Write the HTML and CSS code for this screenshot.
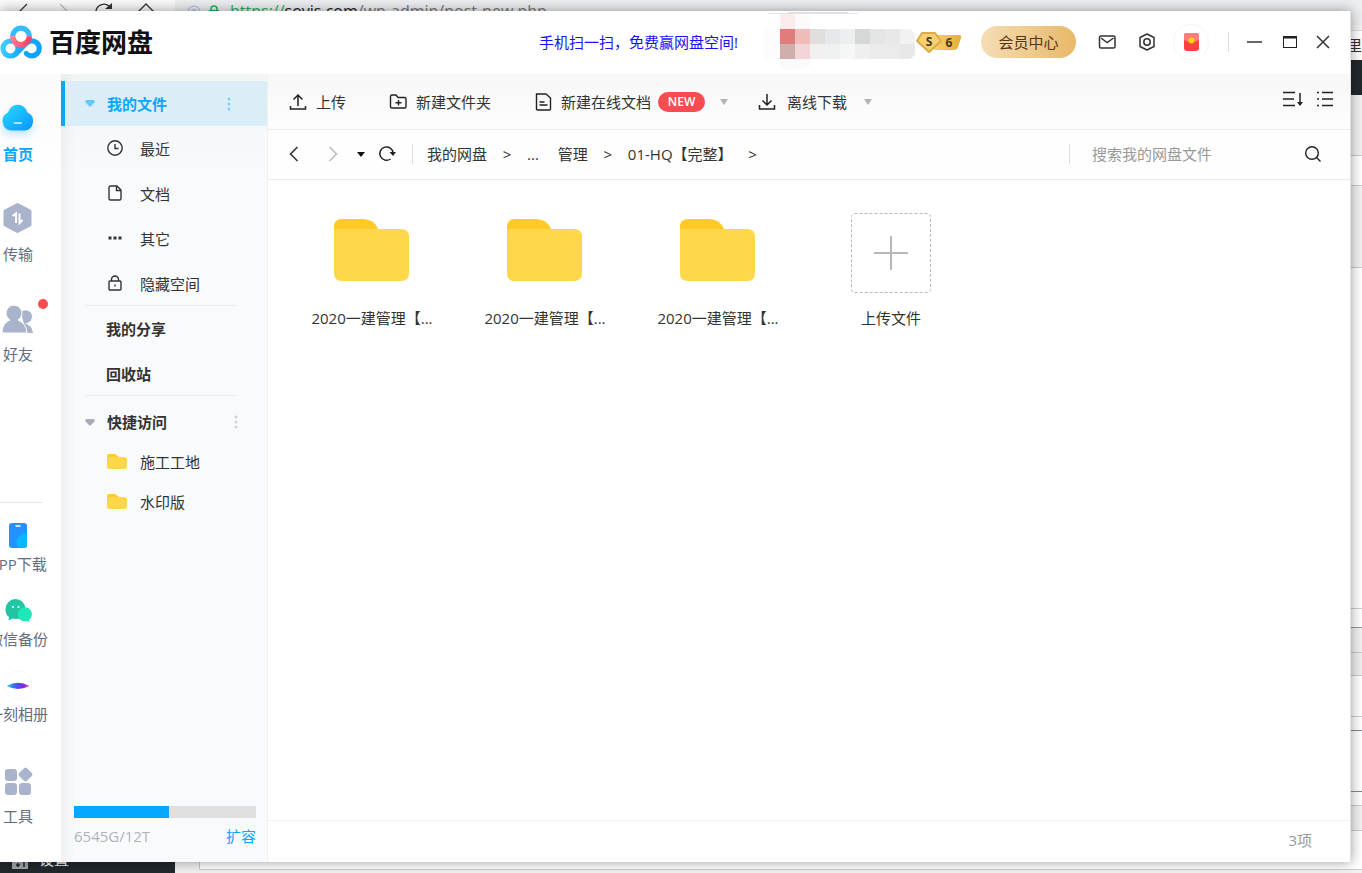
FILE: index.html
```html
<!DOCTYPE html>
<html lang="zh-CN">
<head>
<meta charset="utf-8">
<title>百度网盘</title>
<link rel="stylesheet" href="styles.css">
</head>
<body>
<div class="desktop">
  <div class="browser" aria-hidden="true">
    <div class="browser-bar">
      <div class="browser-nav">
        <svg width="175" height="24" viewBox="0 0 175 24" fill="none" stroke="#333" stroke-width="1.3">
          <path d="M27 4 17 14l10 10"/><path d="M60 4l10 10-10 10" stroke="#bbb"/>
          <path d="M96 13a8 8 0 0 1 14-6"/><path d="M112 3v6h-7z" fill="#333" stroke="none"/>
          <path d="M137 13l9-9 9 9"/>
        </svg>
      </div>
      <div class="address">
        <svg width="40" height="24" viewBox="0 0 40 24" fill="none">
          <circle cx="7" cy="12" r="6" stroke="#9db7e6"/><circle cx="7" cy="12" r="3" fill="#b9cbed"/>
          <path d="M24 11V9a3 3 0 0 1 6 0v2" stroke="#1fb45a" stroke-width="1.5"/><path d="M22 10h10v8H22z" fill="#1fb45a"/>
        </svg>
        <span class="url"><span class="url-scheme">https://</span><span class="url-host">sovis.com</span>/wp-admin/post-new.php</span>
      </div>
    </div>
    <div class="bookmarks">阿里</div>
    <div class="site">
      <div class="site-menu">
        <svg width="16" height="16" viewBox="0 0 16 16"><path d="M0 0h16v16H0z" fill="#a0a5aa"/><path d="M4 12h4M6 10v4M12 9v5" stroke="#23282d" stroke-width="1.5"/></svg>
        <span>设置</span>
      </div>
      <div class="site-page">
        <div class="admin-bar"></div>
        <div class="band band-screen"></div>
        <div class="band band-notice"></div>
        <div class="band band-title"></div>
        <div class="band band-editor"></div>
        <div class="band band-status"></div>
        <div class="band band-gap"></div>
        <div class="band band-head"></div>
        <div class="band band-row"></div>
        <div class="band band-line"></div>
        <div class="band band-field"></div>
        <div class="band band-edge"></div>
        <div class="band band-gap"></div>
        <div class="band band-box"></div>
      </div>
    </div>
  </div>

  <div class="window">
    <header class="titlebar">
      <div class="brand">
        <svg width="42" height="36" viewBox="0 0 42 36" fill="none" stroke-width="5.2" stroke-linecap="round" stroke-linejoin="round">
          <defs>
            <linearGradient id="lg1" gradientUnits="userSpaceOnUse" x1="0" y1="20" x2="42" y2="28"><stop offset="0" stop-color="#45d2ff"/><stop offset=".5" stop-color="#18a8ff"/><stop offset="1" stop-color="#06a2ff"/></linearGradient>
            <linearGradient id="lg2" x1="0" x2="1"><stop offset="0" stop-color="#ff7d85"/><stop offset="1" stop-color="#fb3f66"/></linearGradient>
          </defs>
          <circle cx="10.500" cy="24.500" r="7.500" stroke="url(#lg1)"/>
          <path d="M15.800 29.800 26 19.500a7.500 7.500 0 1 1 .3 10" stroke="url(#lg1)"/>
          <path d="M29.300 12.500a8.300 8.300 0 0 0-16.600 0" stroke="#35bdfb" stroke-linecap="butt"/>
          <path d="M12.700 12.200a8.300 8.300 0 1 0 16.600 0" stroke="url(#lg2)" stroke-linecap="butt"/>
        </svg>
        <h1 class="brand-name">百度网盘</h1>
      </div>
      <a class="promo" href="#">手机扫一扫，免费赢网盘空间!</a>
      <svg class="account" width="152" height="60" viewBox="0 0 152 60" shape-rendering="crispEdges">
        <path d="M4 1h90v1H4z" fill="#e3e4e5"/><path d="M24 0h60v1H24z" fill="#dcddde"/>
        <path d="M0 17h16v30H0z" fill="#fcfcfc"/><path d="M16 2h15v15H16z" fill="#fbecec"/><path d="M31 2h15v15H31z" fill="#fefafa"/>
        <path d="M16 17h15v15H16z" fill="#df7d7d"/><path d="M31 17h15v15H31z" fill="#efbbbb"/><path d="M46 17h15v15H46z" fill="#e0dfdd"/><path d="M61 17h15v15H61z" fill="#e6e8ea"/><path d="M76 17h15v15H76z" fill="#edeeef"/><path d="M91 17h15v15H91z" fill="#d5d8d7"/><path d="M106 17h15v15h-15z" fill="#e3e5e6"/><path d="M121 17h15v15h-15z" fill="#e8e8e8"/><path d="M136 17h10l5 5v10h-15z" fill="#f2f2f2"/>
        <path d="M16 32h15v15H16z" fill="#d0aeac"/><path d="M31 32h15v15H31z" fill="#f2d6d7"/><path d="M46 32h15v15H46z" fill="#f1f0ee"/><path d="M61 32h15v15H61z" fill="#eff0f0"/><path d="M76 32h15v15H76z" fill="#f4f7f6"/><path d="M91 32h15v15H91z" fill="#efefef"/><path d="M106 32h30v15h-30z" fill="#ebebeb"/><path d="M136 32h15v10l-4 5h-11z" fill="#e6e8e9"/>
        <path d="M16 47h30v7l-15 4H20l-4-3z" fill="#fafafa"/>
      </svg>
      <svg class="level" width="46" height="24" viewBox="0 0 46 24" role="img" aria-label="S6">
        <defs><linearGradient id="lv" x1="0" x2="1"><stop offset="0" stop-color="#f8d070"/><stop offset="1" stop-color="#e2af35"/></linearGradient></defs>
        <path d="M18 5h25q3 0 2 3l-3 9q-1 3-4 3H18z" fill="url(#lv)"/>
        <path d="M6 3h13l6 8-12 11L1 11z" fill="#f8d070" stroke="#dcab48" stroke-width="2" stroke-linejoin="round"/>
        <text x="13" y="16" text-anchor="middle" class="level-text">S</text><text x="33" y="17" text-anchor="middle" class="level-text">6</text>
      </svg>
      <button class="vip" type="button">会员中心</button>
      <button class="icon-btn mail" type="button" aria-label="消息"><svg width="24" height="24" viewBox="0 0 24 24" fill="none" stroke="#333" stroke-width="1.5"><rect x="4.500" y="6" width="15.500" height="12" rx="1.500"/><path d="M6 8l6.200 4.500L18.500 8"/></svg></button>
      <button class="icon-btn settings" type="button" aria-label="设置"><svg width="24" height="24" viewBox="0 0 24 24" fill="none" stroke="#333" stroke-width="1.500"><path d="M12 4l7 3.500v9L12 20l-7-3.500v-9z" stroke-linejoin="round"/><circle cx="12" cy="12" r="3.200"/></svg></button>
      <button class="icon-btn gift" type="button" aria-label="红包"><svg width="20" height="20" viewBox="0 0 20 20"><rect x="3" y="1" width="15" height="18" rx="3" fill="#ff4040"/><path d="M3 8V4q0-3 3-3h9q3 0 3 3v4q-7.500 4-15 0z" fill="#ff7d7d"/><circle cx="10.500" cy="8.500" r="3" fill="#ffd800"/></svg></button>
      <span class="title-rule"></span>
      <button class="icon-btn minimize" type="button" aria-label="最小化"><svg width="24" height="24" viewBox="0 0 24 24"><path d="M5 12h15" stroke="#333" stroke-width="1.500"/></svg></button>
      <button class="icon-btn maximize" type="button" aria-label="最大化"><svg width="24" height="24" viewBox="0 0 24 24" fill="none" stroke="#222"><rect x="5.500" y="6.500" width="13" height="11"/><path d="M5 7.500h14" stroke-width="2"/></svg></button>
      <button class="icon-btn close" type="button" aria-label="关闭"><svg width="24" height="24" viewBox="0 0 24 24"><path d="M6 6l12 12M18 6 6 18" stroke="#333" stroke-width="1.500"/></svg></button>
    </header>

    <div class="body">
      <nav class="rail">
        <ul class="rail-list">
          <li><a class="rail-item current" href="#"><span class="rail-icon">
            <svg width="40" height="40" viewBox="0 0 40 40"><defs><linearGradient id="cl" x1="0" y1="0" x2="1" y2="1"><stop offset="0" stop-color="#29dcfd"/><stop offset="1" stop-color="#0794ff"/></linearGradient></defs><path d="M13 32.500a9.500 9.500 0 0 1-3-18 10 10 0 0 1 19.500 0A9.500 9.500 0 0 1 27 32.500z" fill="url(#cl)"/><rect x="15.500" y="24" width="8.500" height="2" rx="1" fill="#a9e2ff"/></svg>
          </span>首页</a></li>
          <li><a class="rail-item" href="#"><span class="rail-icon">
            <svg width="40" height="40" viewBox="0 0 40 40"><path d="M19.500 6.500 32 13v14l-12.500 6.500L7 27V13z" fill="#a9b4cc" stroke="#a9b4cc" stroke-width="3" stroke-linejoin="round"/><path d="M14.500 18l3.500-2.500V25M21.500 15.500V25l3-3" fill="none" stroke="#fff" stroke-width="2"/></svg>
          </span>传输</a></li>
          <li><a class="rail-item" href="#"><span class="rail-icon">
            <svg width="40" height="40" viewBox="0 0 40 40" fill="#a9b4cc"><path d="M23 14a6.500 6.500 0 1 1 3 11q8 2 9 10H28z"/><path d="M4 35q0-10 8-13a8 8 0 1 1 8 0q8 3 9 13z" stroke="#fff"/></svg><i class="dot"></i>
          </span>好友</a></li>
        </ul>
        <ul class="rail-list rail-extra">
          <li><a class="rail-item small" href="#"><span class="rail-icon">
            <svg width="30" height="30" viewBox="0 0 30 30"><rect x="6" y="3" width="18" height="25" rx="3" fill="#2590ff"/><path d="M24 12v13q0 3-3 3h-5.500q-7-10 8.500-16z" fill="#08b7ff"/><rect x="12.500" y="5" width="5" height="2" fill="#c8e6ff"/></svg>
          </span>APP下载</a></li>
          <li><a class="rail-item small" href="#"><span class="rail-icon">
            <svg width="30" height="30" viewBox="0 0 30 30"><path d="M6 22q-4-3-3.500-8a10 10 0 0 1 20 0q0 10-10 10l-3-.5-4 2z" fill="#20c5a2"/><path d="M26 25l1 2-3-1a7 7 0 1 1 2-1z" fill="#1ee8b8"/><circle cx="10" cy="12" r="1.200" fill="#b0ffee"/><circle cx="15.500" cy="12" r="1.200" fill="#b0ffee"/></svg>
          </span>微信备份</a></li>
          <li><a class="rail-item small" href="#"><span class="rail-icon">
            <svg width="30" height="30" viewBox="0 0 30 30"><defs><linearGradient id="ph"><stop offset="0" stop-color="#45dfb6"/><stop offset=".35" stop-color="#3568f5"/><stop offset=".7" stop-color="#7428ed"/><stop offset="1" stop-color="#f54ba0"/></linearGradient></defs><circle cx="15" cy="15" r="14" fill="#fff" stroke="#f7f7fa"/><path d="M3.500 16q11.500-6.500 23 0-11.500 6-23 0z" fill="url(#ph)"/></svg>
          </span>一刻相册</a></li>
          <li class="tools"><a class="rail-item" href="#"><span class="rail-icon">
            <svg width="40" height="40" viewBox="0 0 40 40" fill="#a9b4cc"><rect x="7" y="9" width="12" height="12" rx="3"/><rect x="7" y="23" width="12" height="12" rx="3"/><rect x="21" y="23" width="12" height="12" rx="3"/><rect x="22" y="9" width="11" height="11" rx="2" transform="rotate(45 27.500 14.500)"/></svg>
          </span>工具</a></li>
        </ul>
      </nav>

      <aside class="sidebar">
        <a class="side-item head active" href="#"><svg class="arrow" width="10" height="8" viewBox="0 0 10 8"><path d="M1 0h8l1 2-5 5-5-5z" fill="#66c8fa"/></svg>我的文件<svg class="more" width="4" height="14" viewBox="0 0 4 14" fill="#86cdf2"><circle cx="2" cy="2" r="1.500"/><circle cx="2" cy="7" r="1.500"/><circle cx="2" cy="12" r="1.500"/></svg></a>
        <a class="side-item" href="#"><svg width="18" height="18" viewBox="0 0 18 18" fill="none" stroke="#333" stroke-width="1.400"><circle cx="9" cy="8" r="7.200"/><path d="M9 4v4.500h3.500"/></svg>最近</a>
        <a class="side-item" href="#"><svg width="18" height="18" viewBox="0 0 18 18" fill="none" stroke="#333" stroke-width="1.400"><path d="M4.500 1H11l4 4v8.500q0 1.500-1.500 1.500h-9Q3 15 3 13.500v-11Q3 1 4.500 1zM10.500 1v4.500H15"/></svg>文档</a>
        <a class="side-item" href="#"><svg width="18" height="18" viewBox="0 0 18 18" fill="#333"><path d="M2.500 6.500h3v3h-3zM7.500 6.500h3v3h-3zM12.500 6.500h3v3h-3z"/></svg>其它</a>
        <a class="side-item" href="#"><svg width="18" height="18" viewBox="0 0 18 18" fill="none" stroke="#333" stroke-width="1.400"><rect x="3" y="6" width="12" height="9" rx="1"/><path d="M5.500 6V4.500a3.500 3.500 0 0 1 7 0V6M9 9.500v2"/></svg>隐藏空间</a>
        <hr class="side-rule">
        <a class="side-item head" href="#">我的分享</a>
        <a class="side-item head" href="#">回收站</a>
        <hr class="side-rule">
        <a class="side-item head quick" href="#"><svg class="arrow" width="10" height="8" viewBox="0 0 10 8"><path d="M1 1h8l1 2-5 5-5-5z" fill="#a9adba"/></svg>快捷访问<svg class="more" width="4" height="14" viewBox="0 0 4 14" fill="#d0d2d8"><circle cx="2" cy="2" r="1.500"/><circle cx="2" cy="7" r="1.500"/><circle cx="2" cy="12" r="1.500"/></svg></a>
        <a class="side-item folder" href="#"><svg width="22" height="18" viewBox="0 0 22 18"><path d="M1 3q0-2 2-2h6l4 3v3H1z" fill="#ffc928"/><path d="M1 4h18q2 0 2 2v8q0 2-2 2H3q-2 0-2-2z" fill="#ffd74b"/></svg>施工工地</a>
        <a class="side-item folder" href="#"><svg width="22" height="18" viewBox="0 0 22 18"><path d="M1 3q0-2 2-2h6l4 3v3H1z" fill="#ffc928"/><path d="M1 4h18q2 0 2 2v8q0 2-2 2H3q-2 0-2-2z" fill="#ffd74b"/></svg>水印版</a>
        <div class="quota">
          <progress class="quota-bar" value="52" max="100" aria-label="已用空间"></progress>
          <div class="quota-text"><span>6545G/12T</span><a href="#">扩容</a></div>
        </div>
      </aside>

      <main class="main">
        <div class="toolbar">
          <button class="tool" type="button"><svg width="18" height="18" viewBox="0 0 18 18" fill="none" stroke="#222" stroke-width="1.500"><path d="M9 13V2M4.500 6.500 9 2l4.500 4.500M1.500 13v3h15v-3"/></svg>上传</button>
          <button class="tool" type="button"><svg width="18" height="18" viewBox="0 0 18 18" fill="none" stroke="#222" stroke-width="1.400"><path d="M1.500 3.500Q1.500 2 3 2h4l2 2.500h6.500q1.500 0 1.500 1.500v7.500q0 1.500-1.500 1.500H3q-1.500 0-1.500-1.500zM9.500 7v5.500M6.500 9.700h6"/></svg>新建文件夹</button>
          <button class="tool" type="button"><svg width="18" height="18" viewBox="0 0 18 18" fill="none" stroke="#222" stroke-width="1.400"><path d="M2.500 1H12l4.500 4v11q0 1-1 1h-12q-1 0-1-1zM5.500 9h5M5.500 12h8"/></svg>新建在线文档<span class="badge">NEW</span><svg class="caret" width="12" height="8" viewBox="0 0 12 8"><path d="M2 1h8L6 7z" fill="#b3b3b3"/></svg></button>
          <button class="tool offline" type="button"><svg width="18" height="18" viewBox="0 0 18 18" fill="none" stroke="#222" stroke-width="1.500"><path d="M9 1v11M4.500 7.500 9 12l4.500-4.500M1.500 12v4h15v-4"/></svg>离线下载<svg class="caret" width="12" height="8" viewBox="0 0 12 8"><path d="M2 1h8L6 7z" fill="#b3b3b3"/></svg></button>
          <div class="views">
            <button class="view-btn" type="button" aria-label="排序"><svg width="22" height="18" viewBox="0 0 22 18" fill="none" stroke="#222" stroke-width="1.500"><path d="M1 2.500h12M1 9h11M1 15.500h12M18 3v12"/><path d="M15 12h6l-3 4z" fill="#222" stroke="none"/></svg></button>
            <button class="view-btn" type="button" aria-label="列表"><svg width="18" height="18" viewBox="0 0 18 18" stroke="#222" stroke-width="1.500"><path d="M1 2.500h2M6 2.500h11M1 9h2M6 9h11M1 15.500h2M6 15.500h11"/></svg></button>
          </div>
        </div>
        <div class="pathbar">
          <button class="nav-btn" type="button" aria-label="后退"><svg width="18" height="18" viewBox="0 0 18 18" fill="none" stroke="#333" stroke-width="1.600"><path d="M12.500 2 5.500 9l7 7"/></svg></button>
          <button class="nav-btn forward" type="button" aria-label="前进"><svg width="18" height="18" viewBox="0 0 18 18" fill="none" stroke="#bbb" stroke-width="1.600"><path d="M5.500 2l7 7-7 7"/></svg></button>
          <button class="nav-btn history" type="button" aria-label="历史"><svg width="10" height="18" viewBox="0 0 10 18"><path d="M1 7h8l-4 5z" fill="#111"/></svg></button>
          <button class="nav-btn refresh" type="button" aria-label="刷新"><svg width="18" height="18" viewBox="0 0 18 18" fill="none" stroke="#222" stroke-width="1.500"><path d="M12.500 14a6.700 6.700 0 1 1 2.700-6"/><path d="M11.500 7h6.500l-3 4z" fill="#222" stroke="none"/></svg></button>
          <span class="path-rule"></span>
          <nav class="crumbs"><a href="#">我的网盘</a><span class="sep">&gt;</span><a href="#">...</a><a class="crumb-mid" href="#">管理</a><span class="sep">&gt;</span><a href="#">01-HQ【完整】</a><span class="sep">&gt;</span></nav>
          <form class="search">
            <input class="search-input" type="text" placeholder="搜索我的网盘文件" aria-label="搜索我的网盘文件">
            <button class="nav-btn" type="button" aria-label="搜索"><svg width="18" height="18" viewBox="0 0 18 18" fill="none" stroke="#222" stroke-width="1.400"><circle cx="8" cy="8" r="6.300"/><path d="M12.500 12.500 16.500 16.500"/></svg></button>
          </form>
        </div>
        <div class="files">
          <a class="file" href="#"><svg width="80" height="80" viewBox="0 0 80 80"><path d="M2 14q0-8 8-8h21q11 0 15 10v6H2z" fill="#ffc928"/><path d="M2 16h67q8 0 8 8v36q0 8-8 8H10q-8 0-8-8z" fill="#ffd74b"/></svg><span>2020一建管理【...</span></a>
          <a class="file" href="#"><svg width="80" height="80" viewBox="0 0 80 80"><path d="M2 14q0-8 8-8h21q11 0 15 10v6H2z" fill="#ffc928"/><path d="M2 16h67q8 0 8 8v36q0 8-8 8H10q-8 0-8-8z" fill="#ffd74b"/></svg><span>2020一建管理【...</span></a>
          <a class="file" href="#"><svg width="80" height="80" viewBox="0 0 80 80"><path d="M2 14q0-8 8-8h21q11 0 15 10v6H2z" fill="#ffc928"/><path d="M2 16h67q8 0 8 8v36q0 8-8 8H10q-8 0-8-8z" fill="#ffd74b"/></svg><span>2020一建管理【...</span></a>
          <button class="file" type="button"><svg width="80" height="80" viewBox="0 0 80 80" fill="none" stroke="#b8b8b8"><rect x=".5" y=".5" width="79" height="79" rx="3" stroke-dasharray="3 2"/><path d="M23 40h34M40 23v34" stroke-width="2"/></svg><span>上传文件</span></button>
        </div>
        <footer class="status">3项</footer>
      </main>
    </div>
  </div>
</div>
</body>
</html>
```

FILE: styles.css
```css
* { box-sizing: border-box; }

body {
  margin: 0;
  font: 15px/20px "Open Sans", "Noto Sans CJK SC", sans-serif;
  color: #333;
}

a { color: inherit; text-decoration: none; }
button { padding: 0; border: 0; background: none; font: inherit; color: inherit; cursor: pointer; }
svg { display: block; flex: none; }
ul { margin: 0; padding: 0; list-style: none; }

.desktop { position: relative; display: flex; min-height: 100vh; padding: 11px 11px 11px 0; }

/* Browser behind the client window */
.browser { position: absolute; inset: 0; display: flex; flex-direction: column; overflow: hidden; background: #f1f1f1; }
.browser-bar { display: flex; height: 25px; background: #eceef1; }
.browser-nav { width: 175px; background: #fafafa; }
.address { display: flex; gap: 3px; padding-left: 12px; }
.url { font-size: 16px; line-height: 22px; color: #777; }
.url-scheme { color: #1fb45a; }
.url-host { color: #222; }
.bookmarks { height: 30px; margin-top: 5px; padding-top: 3px; border-top: 1px solid #ddd; background: #fff; text-align: right; line-height: 22px; }
.site { display: flex; flex: 1; }
.site-menu { display: flex; align-items: flex-end; gap: 11px; width: 175px; padding: 0 0 4px 12px; background: #23282d; color: #eee; }
.site-page { display: flex; flex: 1; flex-direction: column; }
.admin-bar { height: 35px; background: #23282d; }
.band { border-bottom: 1px solid #ccc; background: #fff; }
.band-screen { height: 61px; background: #f1f1f1; }
.band-notice { height: 30px; }
.band-title { height: 82px; background: #f1f1f1; }
.band-editor { height: 341px; }
.band-status { height: 19px; border-color: #999; }
.band-gap { height: 25px; background: #f1f1f1; }
.band-head { height: 23px; background: #eee; }
.band-row { height: 41px; }
.band-line { height: 14px; border-color: #7e8993; }
.band-field { height: 61px; border-color: #7e8993; }
.band-edge { height: 14px; }
.band-box { flex: 1; margin: 0 0 3px 24px; border-left: 1px solid #ccc; }

/* Client window */
.window {
  position: relative;
  display: flex;
  flex: 1;
  flex-direction: column;
  min-width: 0;
  border-right: 1px solid #e2e2e2;
  background: #fff;
  box-shadow: 0 0 12px rgba(0, 0, 0, .4);
}
.titlebar { display: flex; align-items: center; height: 63px; padding: 0 15px 1px 0; }
.brand { display: flex; align-items: center; gap: 7px; margin-right: auto; }
.brand-name { margin: 0; font-size: 26px; line-height: 36px; font-weight: 700; color: #111; }
.promo { margin-right: 26px; color: #1a10ff; }
.level-text { font: 700 12px "Open Sans", sans-serif; fill: #4b3b1c; }
.vip { width: 95px; height: 32px; margin: 0 19px; border-radius: 16px; background: linear-gradient(90deg, #f5ddb5, #e8b968); color: #5a3415; }
.settings { margin-left: 16px; }
.gift { display: grid; place-items: center; width: 36px; height: 36px; margin-left: 14px; border: 1px solid #f5f5f5; border-radius: 50%; }
.title-rule { width: 1px; height: 20px; margin: 0 13px 0 19px; background: #ddd; }
.maximize { margin-left: 12px; }
.close { margin-left: 9px; }

.body { display: flex; flex: 1; min-height: 0; }

.rail { display: flex; flex-direction: column; width: 61px; padding: 24px 0 36px; overflow: hidden; background: linear-gradient(#fafafa, #fff 100px); }
.rail-list { display: flex; flex-direction: column; gap: 34px; width: 86px; margin-left: -25px; }
.rail-item { display: flex; flex-direction: column; align-items: center; gap: 6px; color: #636c80; }
.rail-item.current { color: #06a7ff; font-weight: 700; }
.rail-item.small { gap: 4px; }
.current .rail-icon { filter: drop-shadow(0 4px 4px rgba(6, 150, 255, .25)); }
.rail-icon { position: relative; }
.dot { position: absolute; top: 1px; right: -10px; width: 10px; height: 10px; border-radius: 50%; background: #ff4b51; }
.rail-extra { gap: 21px; margin-top: auto; }
.rail-extra::before { content: ""; height: 1px; width: 67px; margin-bottom: -4px; background: #e6e6e6; }
.tools { margin-top: 15px; }

.sidebar {
  display: flex;
  flex-direction: column;
  width: 207px;
  padding-top: 7px;
  border-right: 1px solid #eef0f2;
  background: linear-gradient(90deg, rgba(0, 0, 0, .04), transparent 14px), linear-gradient(#f3f4f5, #f9fafc 100px);
}
.side-item { display: flex; align-items: center; gap: 16px; height: 45px; padding-left: 45px; }
.side-item.head { gap: 12px; font-weight: 700; }
.side-item.head .arrow { margin-left: -21px; }
.more { margin-left: auto; margin-right: 29px; }
.side-item.active { padding-left: 41px; border-left: 4px solid #06a7ff; background: #dbeef8; color: #06a7ff; }
.active .more { margin-right: 36px; }
.side-item.folder { gap: 12px; height: 40px; }
.side-rule { width: 151px; height: 1px; margin: -1px 0 0 25px; border: 0; background: #e8eaec; }
.side-item.quick { height: 40px; margin-top: 6px; }
.quota { margin: auto 11px 16px 13px; }
.quota-bar { display: block; width: 100%; height: 12px; margin-bottom: 8px; border: 0; appearance: none; background: #e0e0e0; }
.quota-bar::-webkit-progress-bar { background: #e0e0e0; }
.quota-bar::-webkit-progress-value { background: #06a7ff; }
.quota-text { display: flex; justify-content: space-between; color: #afb3bf; }
.quota-text a { color: #06a7ff; }

.main { display: flex; flex: 1; flex-direction: column; min-width: 0; }
.toolbar { display: flex; align-items: center; gap: 43px; height: 56px; padding: 0 16px 0 21px; border-bottom: 1px solid #ececec; background: linear-gradient(#f7f7f7, #fdfdfd); }
.tool { display: flex; align-items: center; gap: 9px; }
.badge { width: 47px; margin-left: -2px; border-radius: 10px; background: #f84b52; color: #fff; font-size: 12px; font-weight: 600; }
.badge + .caret { margin-left: 4px; }
.offline { gap: 11px; margin-left: -15px; }
.offline .caret { margin-left: 4px; }
.views { display: flex; gap: 12px; margin: 0 0 6px auto; }

.pathbar { display: flex; align-items: center; height: 50px; padding: 0 28px 1px 17px; border-bottom: 1px solid #ececec; background: #fefefe; }
.forward { margin-left: 21px; }
.history { margin-left: 14px; }
.refresh { margin-left: 12px; }
.path-rule { width: 1px; height: 20px; margin: 0 14px 0 16px; background: #ddd; }
.crumbs { display: flex; }
.sep { width: 40px; text-align: center; }
.crumb-mid { margin-left: 19px; }
.search { display: flex; align-items: center; width: 253px; height: 20px; margin-left: auto; border-left: 1px solid #ddd; }
.search-input { flex: 1; min-width: 0; padding: 0 0 0 22px; border: 0; outline: 0; background: none; font: inherit; }
.search-input::placeholder { color: #999; }

.files { display: grid; flex: 1; grid-template-columns: repeat(auto-fill, 172px); column-gap: 1px; align-content: start; padding: 33px 18px; }
.file { display: flex; flex-direction: column; align-items: center; gap: 15px; }
.status { height: 42px; padding: 9px 38px; border-top: 1px solid #f0f0f0; color: #999; text-align: right; }
```
